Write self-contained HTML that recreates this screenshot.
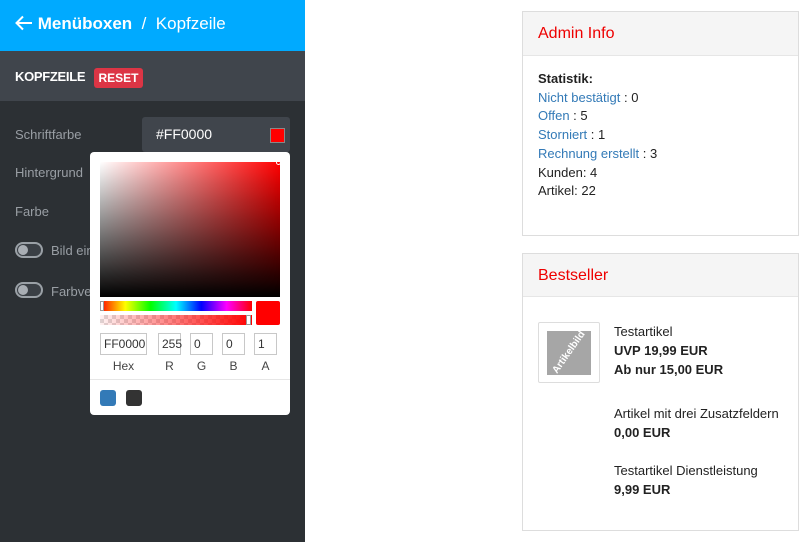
<!DOCTYPE html>
<html><head><meta charset="utf-8"><style>
*{box-sizing:border-box;margin:0;padding:0}
body{width:810px;height:542px;background:#fff;font-family:"Liberation Sans",sans-serif;position:relative;overflow:hidden;font-size:13px;color:#222}
.abs{position:absolute}
#left{left:0;top:0;width:305px;height:542px;background:#2c3034}
.lbl{color:#999ea4;font-size:13px;left:15px}
.inp{border:1px solid #c8c8c8;background:#fff;font-size:12px;color:#333;height:22px;padding:3px 3px}
.cl{font-size:12px;color:#444;text-align:center}
.card{border:1px solid #ddd;background:#fff}
.ch{background:#f5f5f5;border-bottom:1px solid #e6e6e6;color:#e00;font-size:16px;padding-left:15px}
a{color:#337ab7;text-decoration:none}
.tg{width:28px;height:16px;border-radius:8px;border:2px solid #9aa0a6;background:#3a3f45}
.tg div{width:10px;height:10px;margin:1px;border-radius:5px;background:#a9aeb4}
</style></head><body>
<div id="left" class="abs">
 <div class="abs" style="left:0;top:0;width:305px;height:51px;background:#00aaff;color:#fff;font-size:17px;line-height:47px;padding-left:15px">
  <svg width="18" height="16" viewBox="0 0 18 16" style="vertical-align:-2px"><path d="M17 8H2M8 1.5L1.5 8L8 14.5" stroke="#fff" stroke-width="2" fill="none"/></svg>
  <b>Menüboxen</b>&nbsp; / &nbsp;Kopfzeile</div>
 <div class="abs" style="left:0;top:51px;width:305px;height:50px;background:#40454c"></div>
 <div class="abs" style="left:15px;top:69px;color:#fff;font-weight:bold;font-size:13px;letter-spacing:-0.3px">KOPFZEILE</div>
 <div class="abs" style="left:94px;top:68px;width:49px;height:20px;background:#dc3545;border-radius:3px;color:#fff;font-weight:bold;font-size:12px;text-align:center;line-height:20px">RESET</div>
 <div class="abs lbl" style="top:127px">Schriftfarbe</div>
 <div class="abs lbl" style="top:165px">Hintergrund</div>
 <div class="abs lbl" style="top:204px">Farbe</div>
 <div class="abs lbl" style="top:243px;left:51px">Bild ein</div>
 <div class="abs lbl" style="top:284px;left:51px">Farbve</div>
 <div class="abs tg" style="left:15px;top:242px"><div></div></div>
 <div class="abs tg" style="left:15px;top:282px"><div></div></div>
 <div class="abs" style="left:142px;top:117px;width:148px;height:35px;background:#40454c;border-radius:3px;color:#fff;font-size:14px;line-height:34px;padding-left:14px">#FF0000</div>
 <div class="abs" style="left:270px;top:128px;width:15px;height:15px;background:#f00;border:1px solid #888"></div>
</div>
<div class="abs" style="left:90px;top:152px;width:200px;height:263px;background:#fff;border-radius:4px">
 <div class="abs" style="left:10px;top:10px;width:180px;height:135px;background:linear-gradient(to bottom,transparent,#000),linear-gradient(to right,#fff,#f00)"></div>
 <div class="abs" style="left:186px;top:8px;width:5px;height:5px;border:1px solid #fff;border-radius:50%"></div>
 <div class="abs" style="left:10px;top:149px;width:152px;height:10px;background:linear-gradient(to right,#f00,#ff0,#0f0,#0ff,#00f,#f0f,#f00)"></div>
 <div class="abs" style="left:10px;top:149px;width:4px;height:10px;background:#fff;border:1px solid #999"></div>
 <div class="abs" style="left:10px;top:163px;width:152px;height:10px;background:linear-gradient(to right,rgba(255,0,0,.05),#f00),repeating-conic-gradient(#ddd 0 25%,#fff 0 50%) 0 0/8px 8px"></div>
 <div class="abs" style="left:156px;top:163px;width:5px;height:10px;background:#fff;border:1px solid #999"></div>
 <div class="abs" style="left:166px;top:149px;width:24px;height:24px;background:#f00;border-radius:2px"></div>
 <div class="abs inp" style="left:10px;top:181px;width:47px">FF0000</div>
 <div class="abs inp" style="left:68px;top:181px;width:23px">255</div>
 <div class="abs inp" style="left:100px;top:181px;width:23px">0</div>
 <div class="abs inp" style="left:132px;top:181px;width:23px">0</div>
 <div class="abs inp" style="left:164px;top:181px;width:23px">1</div>
 <div class="abs cl" style="left:10px;top:207px;width:47px">Hex</div>
 <div class="abs cl" style="left:68px;top:207px;width:23px">R</div>
 <div class="abs cl" style="left:100px;top:207px;width:23px">G</div>
 <div class="abs cl" style="left:132px;top:207px;width:23px">B</div>
 <div class="abs cl" style="left:164px;top:207px;width:23px">A</div>
 <div class="abs" style="left:0;top:227px;width:200px;height:1px;background:#e6e6e6"></div>
 <div class="abs" style="left:10px;top:238px;width:16px;height:16px;background:#337ab7;border-radius:3px"></div>
 <div class="abs" style="left:36px;top:238px;width:16px;height:16px;background:#333;border-radius:3px"></div>
</div>
<div class="abs card" style="left:522px;top:11px;width:277px;height:225px">
 <div class="ch" style="height:44px;line-height:44px">Admin Info</div>
 <div style="padding:14px 0 0 15px;line-height:18.7px">
  <b>Statistik:</b><br><a>Nicht bestätigt</a> : 0<br><a>Offen</a> : 5<br><a>Storniert</a> : 1<br><a>Rechnung erstellt</a> : 3<br>Kunden: 4<br>Artikel: 22
 </div>
</div>
<div class="abs card" style="left:522px;top:253px;width:277px;height:278px">
 <div class="ch" style="height:43px;line-height:43px">Bestseller</div>
 <div class="abs" style="left:15px;top:68px;width:62px;height:61px;border:1px solid #ddd;border-radius:2px"></div>
 <div class="abs" style="left:24px;top:77px;width:44px;height:44px;background:#a6a6a6;overflow:hidden"><div style="transform:rotate(-55deg);color:#fff;font-size:10px;font-weight:bold;position:absolute;left:-6px;top:16px;width:56px;text-align:center">Artikelbild</div></div>
 <div class="abs" style="left:91px;top:68px;line-height:19px">Testartikel<br><b>UVP 19,99 EUR</b><br><b>Ab nur 15,00 EUR</b></div>
 <div class="abs" style="left:91px;top:150px;line-height:19px">Artikel mit drei Zusatzfeldern<br><b>0,00 EUR</b></div>
 <div class="abs" style="left:91px;top:207px;line-height:19px">Testartikel Dienstleistung<br><b>9,99 EUR</b></div>
</div>
</body></html>
